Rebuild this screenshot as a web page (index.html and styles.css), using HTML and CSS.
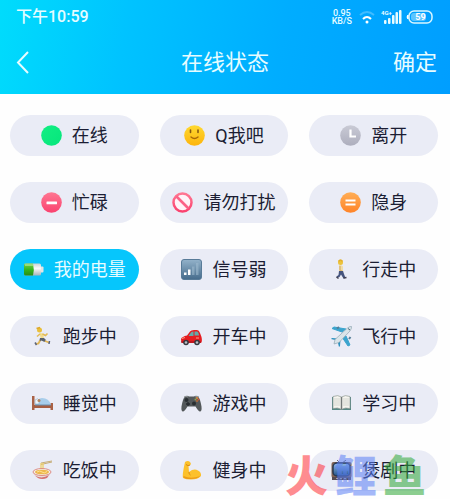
FILE: index.html
```html
<!DOCTYPE html>
<html lang="zh-CN">
<head>
<meta charset="utf-8">
<meta name="viewport" content="width=device-width, initial-scale=1">
<title>在线状态</title>
<link rel="stylesheet" href="styles.css">
</head>
<body>
<header class="top">
  <div class="status">
    <span class="time">下午10:59</span>
    <div class="indicators">
      <span class="speed"><span>0.95</span><span>KB/S</span></span>
      <svg class="wifi" width="16" height="14" viewBox="0 0 16 14" fill="none" stroke="#fff" stroke-width="2">
        <path d="M1 5Q8-1 15 5" opacity=".25"/>
        <path d="M4 9Q8 5 12 9"/>
        <circle cx="8" cy="12" r="1.5" fill="#fff" stroke="none"/>
      </svg>
      <svg class="signal" width="21" height="16" viewBox="0 0 21 16" fill="#e8fbff">
        <rect x="3" y="11" width="2.5" height="4" rx="1"/><rect x="7" y="9" width="2.5" height="6" rx="1"/><rect x="11" y="6" width="2.5" height="9" rx="1"/><rect x="14.500" y="3" width="2.500" height="12" rx="1"/><rect x="18" y="1" width="2.500" height="14" rx="1"/>
        <text x="0" y="6" font-size="6" font-weight="700">4G+</text>
      </svg>
      <svg class="charge" width="27" height="14" viewBox="0 0 27 14">
        <rect x="3" y="1" width="23" height="12" rx="5" fill="none" stroke="#d9f6ff" stroke-width="1.500"/>
        <rect x="5" y="3" width="15" height="8" rx="3" fill="#9bdcff" opacity=".6"/>
        <path d="M2 5v4Q0 7 2 5" fill="#fff" stroke="#fff"/>
        <text x="14.500" y="10" text-anchor="middle" font-size="9" font-weight="700" fill="#fff">59</text>
      </svg>
    </div>
  </div>
  <nav class="bar">
    <button class="back" type="button" aria-label="返回">
      <svg width="14" height="24" viewBox="0 0 14 24" fill="none" stroke="#e6fcff" stroke-width="2"><path d="M12 1L2 11.500 12 22"/></svg>
    </button>
    <h1>在线状态</h1>
    <button class="confirm" type="button">确定</button>
  </nav>
</header>

<svg class="defs" width="0" height="0" aria-hidden="true">
  <defs>
    <linearGradient id="green" x2="1" y2="1"><stop stop-color="#12ee83"/><stop offset="1" stop-color="#06e67c"/></linearGradient>
    <linearGradient id="yellow" x2="0" y2="1"><stop stop-color="#ffd931"/><stop offset="1" stop-color="#fdb40c"/></linearGradient>
    <linearGradient id="gray" x2="0" y2="1"><stop stop-color="#c9cad5"/><stop offset="1" stop-color="#adaebd"/></linearGradient>
    <linearGradient id="pink" x2="0" y2="1"><stop stop-color="#ff7792"/><stop offset="1" stop-color="#fa426f"/></linearGradient>
    <linearGradient id="orange" x2="0" y2="1"><stop stop-color="#ffae56"/><stop offset="1" stop-color="#ff8428"/></linearGradient>
    <linearGradient id="steel" x2="0" y2="1"><stop stop-color="#93b2ca"/><stop offset="1" stop-color="#456b8b"/></linearGradient>
    <linearGradient id="cell" x2="0" y2="1"><stop stop-color="#78cf4c"/><stop offset=".5" stop-color="#35b61d"/><stop offset="1" stop-color="#278d19"/></linearGradient>
    <linearGradient id="silver" x2="0" y2="1"><stop stop-color="#c9d2d3"/><stop offset=".4" stop-color="#fafafa"/><stop offset="1" stop-color="#a9b3b8"/></linearGradient>
    <linearGradient id="screen" x2="0" y2="1"><stop stop-color="#91bdec"/><stop offset="1" stop-color="#245287"/></linearGradient>
  </defs>
</svg>

<main class="grid">
  <button class="pill" type="button"><svg class="icon" viewBox="0 0 21 21"><circle cx="10.500" cy="10.500" r="10.300" fill="url(#green)"/></svg>在线</button>

  <button class="pill" type="button"><svg class="icon" viewBox="0 0 21 21"><circle cx="10.500" cy="10.500" r="10.300" fill="url(#yellow)"/><path d="M6.500 5v2.500M14 5v2.500" stroke="#875810" stroke-width="1.600" stroke-linecap="round"/><path d="M7 12q3.500 3 7 0" fill="none" stroke="#a86808" stroke-width="1.400" stroke-linecap="round"/></svg>Q我吧</button>

  <button class="pill" type="button"><svg class="icon" viewBox="0 0 21 21"><circle cx="10.500" cy="10.500" r="10.300" fill="url(#gray)"/><path d="M10.500 4.500V11.500H16" fill="none" stroke="#fff" stroke-width="2.200"/></svg>离开</button>

  <button class="pill" type="button"><svg class="icon" viewBox="0 0 21 21"><circle cx="10.500" cy="10.500" r="10.300" fill="url(#pink)"/><rect x="5.500" y="9.500" width="10.500" height="2.700" rx=".5" fill="#fff"/></svg>忙碌</button>

  <button class="pill" type="button"><svg class="icon" viewBox="0 0 21 21"><circle cx="10.500" cy="10.500" r="9" fill="#fff4f8" stroke="url(#pink)" stroke-width="2.500"/><path d="M4.500 4.500l12 12" stroke="#fb6387" stroke-width="2.600"/></svg>请勿打扰</button>

  <button class="pill" type="button"><svg class="icon" viewBox="0 0 21 21"><circle cx="10.500" cy="10.500" r="10.300" fill="url(#orange)"/><path d="M5.500 8.500H15.500M5.500 12.500H15.500" stroke="#fff" stroke-width="2"/></svg>隐身</button>

  <button class="pill active" type="button" aria-pressed="true"><svg class="icon" viewBox="0 0 21 21"><rect x="1" y="4.500" width="17" height="12" rx="1.500" fill="url(#silver)"/><path d="M18 7.500h1.500q1 0 1 1v4q0 1-1 1H18z" fill="#e1e5e5"/><path d="M2.500 4.500H10q1.500 6 0 12H2.500Q1 16.500 1 15v-9Q1 4.500 2.500 4.500z" fill="url(#cell)"/><path d="M2 6h8" stroke="#c9edb0"/></svg>我的电量</button>

  <button class="pill" type="button"><svg class="icon" viewBox="0 0 21 21"><rect x=".5" y=".5" width="20" height="20" rx="2.500" fill="url(#steel)" stroke="#587b98"/><path d="M3 13.500h2.500V16H3zM7 10.500h2.500V16H7z" fill="#fff"/><path d="M11 7.500h2.500V16H11zM15 4h2.500v12H15z" fill="#9fbace" opacity=".6"/></svg>信号弱</button>

  <button class="pill" type="button"><svg class="icon" viewBox="0 0 21 21"><circle cx="9.500" cy="3.500" r="2.500" fill="#ecc33c"/><path d="M7.500 2.500q2-3 4 0" stroke="#e3ae27" fill="none" stroke-width="1.500"/><path d="M8 6q3-.5 4 1.500v6H8z" fill="#f1dda6"/><path d="M9 7v4l3 2" fill="none" stroke="#d9b36b" stroke-width="1.300"/><path d="M8 12h4l1 3 1.500 4-2 .5L10 15.500 8.500 18 6 19l-.5-1.500L7.500 16z" fill="#46547d"/><path d="M5.500 18l2 1.500M12.500 19l3-.5" stroke="#434151" stroke-width="1.500"/></svg>行走中</button>

  <button class="pill" type="button"><svg class="icon" viewBox="0 0 21 21" fill="none"><circle cx="7.500" cy="4" r="2.500" fill="#eabf39"/><path d="M4.500 2.500L8 1.500" stroke="#dda82a" stroke-width="1.500"/><path d="M7.500 7l3.500.5 1 5-3 1z" fill="#f2dc8c"/><path d="M8 8l-3 2.500M10.500 8l3 1.500 2-2" stroke="#e3bb55" stroke-width="1.600"/><path d="M8 12h4l2 2-1.500 2-3-1.500L7 16z" fill="#59606b"/><path d="M8 14.500L6.500 17.500 3.500 18M13 15l4 1.500" stroke="#dfb453" stroke-width="1.800"/><path d="M3 16.500l1.500 2.500M17.500 15l-.500 3" stroke="#5c657d" stroke-width="1.500"/></svg>跑步中</button>

  <button class="pill" type="button"><svg class="icon" viewBox="0 0 21 21"><path d="M0 13q1-2.500 6-3.500L9 5.500Q10 4 13 4h3q2 0 3 3l1.500 4q1 5-.5 6H1Q0 16 0 13z" fill="#e51c20"/><path d="M7.500 10L10 6.500q.5-1 2.500-1V10zM13.500 5.500h2.500q1.500 0 2 4h-4.500z" fill="#63aaa9"/><path d="M1 12.500l3-1M15 12h3" stroke="#ff9a7e"/><path d="M0 16h20" stroke="#9c1520"/><circle cx="5" cy="16.500" r="2.800" fill="#373940"/><circle cx="16" cy="16.500" r="2.800" fill="#373940"/><circle cx="5" cy="16.500" r="1.300" fill="#bac0c4"/><circle cx="16" cy="16.500" r="1.300" fill="#bac0c4"/></svg>开车中</button>

  <button class="pill" type="button"><svg class="icon" viewBox="0 0 21 21"><path d="M11 6L1 2.500 3 1l12 2zM15 10l4 9-2 1-6-9z" fill="#3ba4ce" stroke="#3ba4ce"/><path d="M4 14l-4-1 1-1 6 .5zM7 17l1 4 1-1 .5-6z" fill="#2d91bf"/><path d="M20.500.500Q19 0 16.500 2L4 13.500 3 18l5-1.500L19 5q2-3 1.500-4.500z" fill="#d9e4e9" stroke="#91a6b2" stroke-width=".7"/><path d="M17 2.500l2 1.500" stroke="#48677a"/><path d="M6 2.500l2-1.500M18 13l1.500-2" stroke="#557f98" stroke-width="2"/></svg>飞行中</button>

  <button class="pill" type="button"><svg class="icon" viewBox="0 0 21 21"><path d="M0 3h2.500v14H0zM18.500 10H21v7h-2.500z" fill="#a96145"/><path d="M2 12h17v3H2z" fill="#a65d40"/><path d="M3 11.500Q5 5 10 5q7 0 9 7H3z" fill="#a8cdea"/><path d="M3 7q3-2.500 4 0v4H3z" fill="#edf4fa" stroke="#8eabc1" stroke-width=".6"/><circle cx="7" cy="7.500" r="1.500" fill="#b3845f"/><path d="M3 12h16" stroke="#6b8eac"/></svg>睡觉中</button>

  <button class="pill" type="button"><svg class="icon" viewBox="0 0 21 21"><path d="M4 3.500q2-1.500 4 0h5q2-1.500 4 0 2 1.500 3.500 10 .5 5-1.500 5-1.500 0-4.500-5h-8q-3 5-4.500 5-2 0-1.500-5Q2 5 4 3.500z" fill="#53585a"/><path d="M3 4q2-1.500 4 0M14 4q2-1.500 4 0" fill="none" stroke="#929697"/><circle cx="5.500" cy="7" r="2" fill="#292e31"/><circle cx="13" cy="10.500" r="2" fill="#292e31"/><path d="M7 9v4M5 11h4" stroke="#262a2d" stroke-width="1.300"/><circle cx="16" cy="5" r="1.100" fill="#db8a39"/><circle cx="14.500" cy="6.500" r="1" fill="#8ca44e"/><circle cx="17.500" cy="6.500" r="1" fill="#d35741"/><circle cx="16" cy="8" r="1" fill="#b96838"/></svg>游戏中</button>

  <button class="pill" type="button"><svg class="icon" viewBox="0 0 21 21"><path d="M1 4h19v13H1z" fill="#568884"/><path d="M2 3.500Q7 1.500 10.500 4 14 1.500 19 3.500v12q-5-1.500-8.500 1Q7 14 2 15.500z" fill="#f5f4ee" stroke="#8b9792" stroke-width=".7"/><path d="M10.500 4v12.500" stroke="#737978" stroke-width="1.500"/><path d="M4 5v8M6 5v8M8 5v8M13 5v8M15 5v8M17 5v8" stroke="#c5c8c1" stroke-width=".7"/></svg>学习中</button>

  <button class="pill" type="button"><svg class="icon" viewBox="0 0 21 21"><path d="M9 3l11-2M9 4.500L20 2" stroke="#c6ad76" stroke-width="1"/><path d="M9 3v8M11 3v8" stroke="#efcf68" stroke-width="1.300"/><path d="M1 12q2 7 9 7t9-7z" fill="#e8dcd9"/><path d="M3 15.500q7 4 14-.5l-2 3q-5 2-9 0z" fill="#d47172"/><ellipse cx="10" cy="12" rx="9" ry="3.500" fill="#f5efe5" stroke="#d87770" stroke-width=".8"/><ellipse cx="10" cy="12" rx="7" ry="2.300" fill="#edb74c"/><path d="M5 12q3-2 5 0t5-.5" fill="none" stroke="#ffe293"/></svg>吃饭中</button>

  <button class="pill" type="button"><svg class="icon" viewBox="0 0 21 21"><path d="M4 2q3-2 5 0 1.500 1.500.500 3L7.500 6l.5 6q5-4 9-1.500Q20.500 12 20 16q-3 3.500-10 3.500-5 0-8-1.500Q1 15 4 2z" fill="#fcc12c"/><path d="M2.500 16q7 3.500 17 0-3 3-10 3-5 0-7-1.500z" fill="#ec9b19"/><path d="M5 4.500q2 2 4 .5M8 12q-.5 2 1.500 3" fill="none" stroke="#d98a17"/></svg>健身中</button>

  <button class="pill" type="button"><svg class="icon" viewBox="0 0 21 21"><path d="M6 0l4 4 5-4" fill="none" stroke="#65686c"/><rect x=".5" y="2" width="20" height="16" rx="2" fill="#806253"/><rect x="2" y="3" width="17" height="13" rx="4" fill="url(#screen)" stroke="#293a52" stroke-width="1.500"/><path d="M1 17h19v3H1z" fill="#554b51"/><path d="M5 18.500h2M9 18.500h2M13 18.500h2" stroke="#a7a39d"/></svg>煲剧中</button>
</main>

<div class="watermark" aria-hidden="true"><span class="red">火</span><span class="blue">鲤</span><span class="leaf">鱼</span></div>
</body>
</html>
```

FILE: styles.css
```css
* {
  box-sizing: border-box;
}

body {
  margin: 0;
  background: #fefefe;
  color: #1b1d33;
  font-family: Roboto, "Noto Sans CJK SC", sans-serif;
}

button {
  margin: 0;
  padding: 0;
  border: 0;
  background: none;
  color: inherit;
  font: inherit;
}

svg {
  display: block;
  flex: none;
}

.top {
  padding-bottom: 8px;
  background: linear-gradient(100deg, #00dcfc 0%, #00c3ff 28%, #00adff 62%, #009eff 100%);
  color: #e6fcff;
}

.status {
  display: flex;
  align-items: center;
  justify-content: space-between;
  height: 34px;
  padding: 0 17px 0 16px;
}

.time {
  font-size: 16px;
  font-weight: 500;
  line-height: 24px;
}

.indicators {
  display: flex;
  align-items: center;
}

.speed {
  display: flex;
  flex-direction: column;
  align-items: center;
  margin-right: 7px;
  font-size: 9px;
  font-weight: 500;
  line-height: 8px;
}

.signal {
  margin: 0 4px 0 6px;
}

.bar {
  display: grid;
  grid-template-columns: 1fr auto 1fr;
  align-items: center;
  height: 52px;
  padding: 6px 13px 0;
}

.bar h1,
.confirm {
  margin: 0;
  font-size: 22px;
  font-weight: 400;
  line-height: 32px;
}

.back {
  justify-self: start;
  padding-left: 3px;
}

.confirm {
  justify-self: end;
}

.defs {
  position: absolute;
}

.grid {
  display: grid;
  grid-template-columns: repeat(3, 1fr);
  gap: 26px 21px;
  padding: 21px 12px 7px 10px;
}

.pill {
  display: flex;
  align-items: center;
  justify-content: center;
  gap: 10px;
  height: 41px;
  border-radius: 21px;
  background: #eaecf6;
  font-size: 18px;
  line-height: 26px;
  white-space: nowrap;
}

.active {
  background: #06c6fc;
  color: #e6fcff;
}

.icon {
  width: 21px;
  height: 21px;
}

.watermark {
  position: absolute;
  right: 24px;
  bottom: 2px;
  display: flex;
  gap: 6px;
  font-family: "Noto Sans CJK SC", sans-serif;
  font-size: 43px;
  font-weight: 900;
  line-height: 48px;
  opacity: 0.55;
  pointer-events: none;
}

.red {
  color: #ff3038;
}

.blue {
  color: #5c80f5;
}

.leaf {
  color: #30a838;
}
```
